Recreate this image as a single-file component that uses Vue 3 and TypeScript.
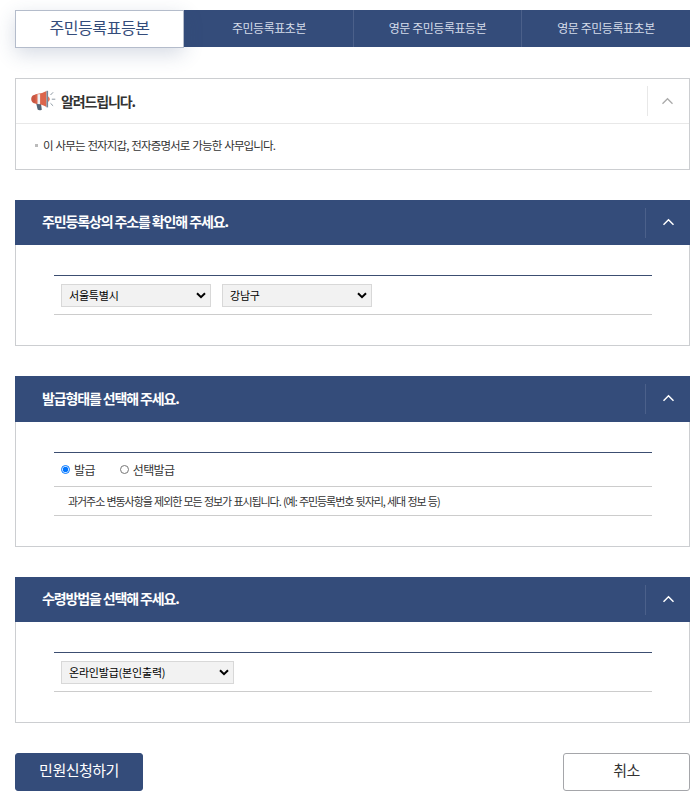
<script setup lang="ts">
import { ref } from 'vue'

const tabs: string[] = ['주민등록표등본', '주민등록표초본', '영문 주민등록표등본', '영문 주민등록표초본']
const activeTab = ref(0)
const city = ref('서울특별시')
const district = ref('강남구')
const issueType = ref('full')
const method = ref('온라인발급(본인출력)')
</script>

<template>
  <main class="page">
    <nav class="tabs">
      <button
        v-for="(tab, i) in tabs"
        :key="tab"
        type="button"
        class="tab"
        :class="{ active: i === activeTab }"
        @click="activeTab = i"
      >
        <span>{{ tab }}</span>
      </button>
    </nav>

    <section class="notice">
      <header class="notice-head">
        <svg class="horn" width="25" height="22" viewBox="0 0 25 22">
          <path d="M5 12.5 10 13.500l.8 6.200q-2.600 1.300-4.200-.2z" fill="#526577" />
          <path d="M5 4.500Q.2 4.800.2 9T5 13.600z" fill="#c95743" />
          <path d="M4.500 4.300Q10 4.300 15.500 1v16Q11 14 4.500 13.800z" fill="#dc664d" />
          <path d="M6.500 4.200h2.600v9.900H6.500z" fill="#eceff2" />
          <path d="M15.500.8h1.600v16.600h-1.600z" fill="#71869a" />
          <path d="M17.100 6.200q3.300 2.900 0 5.800z" fill="#dc664d" />
          <path d="m19.500 5 2.600-2.700M20.800 9.200h3.500M19.500 13.300l2.600 2.500" fill="none" stroke="#8e99a3" stroke-width="1" />
        </svg>
        <h2>알려드립니다.</h2>
        <span class="toggle">
          <svg width="13" height="8" viewBox="0 0 13 8"><path d="m1.500 6.700 5-5 5 5" /></svg>
        </span>
      </header>
      <p class="notice-body">이 사무는 전자지갑, 전자증명서로 가능한 사무입니다.</p>
    </section>

    <section class="panel address">
      <header class="panel-head">
        <h2>주민등록상의 주소를 확인해 주세요.</h2>
        <span class="toggle">
          <svg width="13" height="8" viewBox="0 0 13 8"><path d="m1.500 6.700 5-5 5 5" /></svg>
        </span>
      </header>
      <div class="form">
        <div class="row fields">
          <label class="select">
            <select v-model="city"><option>서울특별시</option></select>
            <svg width="10" height="7" viewBox="0 0 10 7"><path d="m1 1.200 4 4 4-4" /></svg>
          </label>
          <label class="select">
            <select v-model="district"><option>강남구</option></select>
            <svg width="10" height="7" viewBox="0 0 10 7"><path d="m1 1.200 4 4 4-4" /></svg>
          </label>
        </div>
      </div>
    </section>

    <section class="panel issue">
      <header class="panel-head">
        <h2>발급형태를 선택해 주세요.</h2>
        <span class="toggle">
          <svg width="13" height="8" viewBox="0 0 13 8"><path d="m1.500 6.700 5-5 5 5" /></svg>
        </span>
      </header>
      <div class="form">
        <div class="row radios">
          <label><input v-model="issueType" type="radio" value="full" /><span>발급</span></label>
          <label><input v-model="issueType" type="radio" value="partial" /><span>선택발급</span></label>
        </div>
        <p class="row hint">과거주소 변동사항을 제외한 모든 정보가 표시됩니다. (예: 주민등록번호 뒷자리, 세대 정보 등)</p>
      </div>
    </section>

    <section class="panel receive">
      <header class="panel-head">
        <h2>수령방법을 선택해 주세요.</h2>
        <span class="toggle">
          <svg width="13" height="8" viewBox="0 0 13 8"><path d="m1.500 6.700 5-5 5 5" /></svg>
        </span>
      </header>
      <div class="form">
        <div class="row fields">
          <label class="select wide">
            <select v-model="method"><option>온라인발급(본인출력)</option></select>
            <svg width="10" height="7" viewBox="0 0 10 7"><path d="m1 1.200 4 4 4-4" /></svg>
          </label>
        </div>
      </div>
    </section>

    <footer class="actions">
      <button type="button" class="submit">민원신청하기</button>
      <button type="button" class="cancel">취소</button>
    </footer>
  </main>
</template>

<style>
body {
  background: #fff;
}
</style>

<style scoped>
* {
  box-sizing: border-box;
  margin: 0;
}
.page {
  width: 699px;
  height: 799px;
  padding: 10px 9px 0 15px;
  overflow: hidden;
  color: #333;
  font-family: 'Noto Sans CJK KR', sans-serif;
}
button,
select {
  font-family: inherit;
}
.tabs {
  display: grid;
  grid-template-columns: 170px 169px 168px 168px;
  height: 37px;
  background: #344c7a;
}
.tab {
  display: flex;
  align-items: center;
  justify-content: center;
  height: 37px;
  padding: 0 0 2px;
  border: 0;
  border-right: 1px solid #4b608a;
  background: none;
  color: #d5dcea;
  font-size: 12px;
  letter-spacing: -0.45px;
}
.tab:last-child {
  border-right: 0;
}
.tab.active {
  width: 169px;
  height: 38px;
  padding-bottom: 5px;
  border: 1px solid #b4bccb;
  background: #fff;
  box-shadow: 0 6px 20px rgba(52, 76, 122, 0.2);
  color: #344c7a;
  font-size: 16px;
  letter-spacing: -0.45px;
}
.notice {
  height: 92px;
  margin-top: 31px;
  border: 1px solid #ccced1;
  background: #fff;
}
.notice-head {
  display: flex;
  align-items: center;
  height: 45px;
  padding-left: 15px;
  border-bottom: 1px solid #e8e8e8;
}
.horn {
  flex: none;
}
h2 {
  padding-bottom: 3px;
  font-size: 14px;
  font-weight: 700;
  line-height: 20px;
  letter-spacing: -1.13px;
  white-space: nowrap;
}
.notice h2 {
  margin-left: 5px;
  padding-bottom: 1px;
}
.toggle {
  display: flex;
  align-items: center;
  justify-content: center;
  width: 42px;
  height: 30px;
  margin-left: auto;
  border-left: 1px solid #e8e8e8;
}
.toggle path {
  fill: none;
  stroke: #aaa;
  stroke-width: 1.300;
}
.notice .toggle {
  padding-right: 2px;
}
.notice-body {
  display: flex;
  align-items: center;
  height: 42px;
  padding-left: 19px;
  font-size: 11.5px;
  letter-spacing: -0.88px;
  word-spacing: 1.1px;
  white-space: nowrap;
}
.notice-body::before {
  width: 3px;
  height: 3px;
  margin-right: 5px;
  background: #bbb;
  content: '';
}
.panel {
  margin-top: 30px;
  border: 1px solid #ccced1;
  border-top: 0;
}
.address {
  height: 146px;
}
.issue {
  height: 171px;
}
.receive {
  height: 146px;
}
.panel-head {
  display: flex;
  align-items: center;
  height: 45px;
  margin: 0 -1px;
  padding-left: 27px;
  background: #344c7a;
  color: #fff;
}
.issue .panel-head {
  height: 46px;
}
.panel-head .toggle {
  width: 45px;
  padding: 0 0 2px 1px;
  border-color: #4b608a;
}
.panel-head .toggle path {
  stroke: #fff;
  stroke-width: 1.500;
}
.form {
  margin: 30px 37px 0 38px;
  border-top: 1px solid #3c4e71;
}
.row {
  display: flex;
  align-items: center;
  border-bottom: 1px solid #ccc;
}
.fields {
  gap: 11px;
  height: 39px;
  padding-left: 7px;
}
.select {
  display: grid;
  width: 150px;
  height: 23px;
  align-items: center;
  border: 1px solid #d8d8d8;
  background: #f2f2f2;
}
.select.wide {
  width: 173px;
}
.select select,
.select svg {
  grid-area: 1 / 1;
}
.select select {
  width: 100%;
  height: 21px;
  padding: 0 20px 0 7px;
  border: 0;
  outline: 0;
  appearance: none;
  background: transparent;
  color: #000;
  font-size: 11px;
  letter-spacing: -0.2px;
}
.select svg {
  justify-self: end;
  margin-right: 4px;
  pointer-events: none;
}
.select path {
  fill: none;
  stroke: #000;
  stroke-width: 2;
}
.radios {
  gap: 25px;
  height: 34px;
  padding-left: 7px;
}
.radios label {
  display: flex;
  align-items: center;
  font-size: 12px;
  line-height: 18px;
  letter-spacing: -0.65px;
}
.radios input {
  width: 9px;
  height: 9px;
  margin: 0 4px 0 0;
}
.hint {
  height: 29px;
  padding-left: 14px;
  font-size: 11px;
  letter-spacing: -1.07px;
  word-spacing: 0.92px;
  white-space: nowrap;
}
.actions {
  display: flex;
  justify-content: space-between;
  margin-top: 30px;
}
.actions button {
  height: 38px;
  padding: 0 0 5px;
  border-radius: 3px;
  font-size: 15px;
  letter-spacing: -0.5px;
}
.submit {
  width: 128px;
  border: 1px solid #344c7a;
  background: #344c7a;
  color: #fff;
}
.cancel {
  width: 127px;
  border: 1px solid #a5a6aa;
  background: #fff;
  color: #333;
}
</style>
